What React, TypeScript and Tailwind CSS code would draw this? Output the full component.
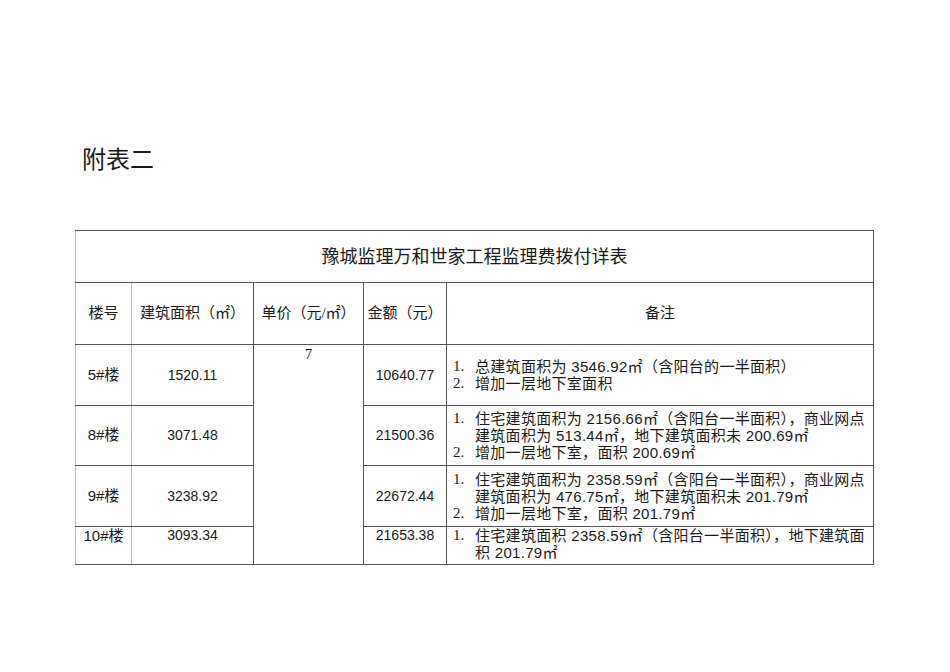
import React from "react";

const cjk = "font-['Liberation_Serif','Noto_Sans_CJK_SC',serif]";
const num = "font-['Liberation_Sans','Noto_Sans_CJK_SC',sans-serif]";

type Note = { lines: string[] };

const ROWS: {
  name: string;
  area: string;
  amount: string;
  notes: Note[];
  h: string;
  top?: boolean;
}[] = [
  {
    name: "5#楼",
    area: "1520.11",
    amount: "10640.77",
    h: "h-[61px]",
    notes: [
      { lines: ["总建筑面积为 3546.92㎡（含阳台的一半面积）"] },
      { lines: ["增加一层地下室面积"] },
    ],
  },
  {
    name: "8#楼",
    area: "3071.48",
    amount: "21500.36",
    h: "h-[60px]",
    notes: [
      {
        lines: [
          "住宅建筑面积为 2156.66㎡（含阳台一半面积），商业网点",
          "建筑面积为 513.44㎡，地下建筑面积未 200.69㎡",
        ],
      },
      { lines: ["增加一层地下室，面积 200.69㎡"] },
    ],
  },
  {
    name: "9#楼",
    area: "3238.92",
    amount: "22672.44",
    h: "h-[61px]",
    notes: [
      {
        lines: [
          "住宅建筑面积为 2358.59㎡（含阳台一半面积），商业网点",
          "建筑面积为 476.75㎡，地下建筑面积未 201.79㎡",
        ],
      },
      { lines: ["增加一层地下室，面积 201.79㎡"] },
    ],
  },
  {
    name: "10#楼",
    area: "3093.34",
    amount: "21653.38",
    h: "h-[38px]",
    top: true,
    notes: [
      {
        lines: [
          "住宅建筑面积 2358.59㎡（含阳台一半面积），地下建筑面",
          "积 201.79㎡",
        ],
      },
    ],
  },
];

function Notes({ notes }: { notes: Note[] }) {
  return (
    <div className="flex flex-col pl-[6px] text-[15px] leading-[17px]">
      {notes.map((n, i) => (
        <div key={i} className="flex">
          <span className={`w-[22px] shrink-0 ${cjk}`}>{i + 1}.</span>
          <div className={`flex flex-col whitespace-nowrap tracking-[0.3px] ${num}`}>
            {n.lines.map((l, j) => (
              <span key={j}>{l}</span>
            ))}
          </div>
        </div>
      ))}
    </div>
  );
}

export default function App() {
  const dark = "border border-[#555]";
  return (
    <div className={`w-[950px] h-[672px] bg-white text-[#1a1a1a] ${cjk}`}>
      <div className="pt-[146px] pl-[82px] text-[24px] leading-[28px]">附表二</div>

      <table className="mt-[56px] ml-[75px] w-[798px] border-collapse table-fixed">
        <colgroup>
          <col className="w-[56px]" />
          <col className="w-[122px]" />
          <col className="w-[110px]" />
          <col className="w-[83px]" />
          <col className="w-[427px]" />
        </colgroup>
        <tbody>
          <tr className="h-[52px]">
            <td
              colSpan={5}
              className="border-t border-r border-b border-[#555] border-l border-l-[#bbb] text-center text-[18px] pt-[1px]"
            >
              豫城监理万和世家工程监理费拨付详表
            </td>
          </tr>
          <tr className="h-[62px] text-[15px] text-center">
            <td className="border border-[#555] border-l-[#bbb] border-r-[#bbb]">楼号</td>
            <td className={`${dark} border-l-[#bbb]`}>建筑面积（㎡）</td>
            <td className={dark}>单价（元/㎡）</td>
            <td className={dark}>金额（元）</td>
            <td className={dark}>备注</td>
          </tr>
          {ROWS.map((r, i) => (
            <tr key={r.name} className={`${r.h} text-center`}>
              <td
                className={`border border-[#555] border-l-[#bbb] border-r-[#bbb] text-[15px] ${
                  r.top ? "align-top leading-[17px]" : ""
                }`}
              >
                <span className={num}>{r.name.replace("楼", "")}</span>楼
              </td>
              <td
                className={`${dark} border-l-[#bbb] text-[14px] ${num} ${
                  r.top ? "align-top leading-[17px]" : ""
                }`}
              >
                {r.area}
              </td>
              {i === 0 && (
                <td rowSpan={4} className={`${dark} align-top text-[15px] pt-[1px] leading-[17px]`}>
                  7
                </td>
              )}
              <td
                className={`${dark} text-[14px] ${num} ${r.top ? "align-top leading-[17px]" : ""}`}
              >
                {r.amount}
              </td>
              <td className={`${dark} text-left ${r.top ? "align-top" : ""}`}>
                <Notes notes={r.notes} />
              </td>
            </tr>
          ))}
        </tbody>
      </table>
    </div>
  );
}
